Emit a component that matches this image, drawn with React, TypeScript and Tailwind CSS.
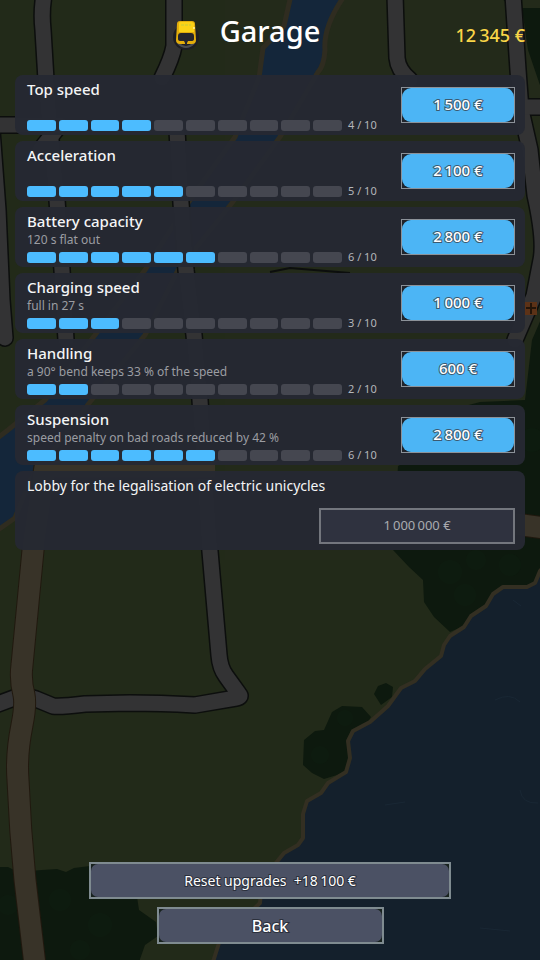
import clsx from 'clsx';

type Upgrade = {
  name: string;
  detail?: string;
  level: number;
  price: string;
};

const MAX_LEVEL = 10;

const upgrades: Upgrade[] = [
  { name: 'Top speed', level: 4, price: '1\u2009500 €' },
  { name: 'Acceleration', level: 5, price: '2\u2009100 €' },
  { name: 'Battery capacity', detail: '120 s flat out', level: 6, price: '2\u2009800 €' },
  { name: 'Charging speed', detail: 'full in 27 s', level: 3, price: '1\u2009000 €' },
  { name: 'Handling', detail: 'a 90° bend keeps 33 % of the speed', level: 2, price: '600 €' },
  { name: 'Suspension', detail: 'speed penalty on bad roads reduced by 42 %', level: 6, price: '2\u2009800 €' },
];

const streets = [
  'M44 -5 Q41 12 43 30 L46 80 L50 130 L57 200 L62 270 L66 340',
  'M174 -5 L174 46 Q172 58 162 78',
  'M177 130 L181 203 L186 270 L194 335 L200 400 L209 540 L219 655 Q220 668 226 676 L239 694 Q242 697 236 698 L195 705 Q160 703 130 703 L85 704 Q60 707 53 706 L36 699 L22 695 L-5 705',
  'M395 -5 L397 58 Q398 70 410 80',
  'M513 -5 L518 70 L521 110 L530 150 L535 195 Q545 240 541 260 L534 296 L515 340',
  'M518 107 L545 107',
  'M-5 125 L60 125 L40 150',
  'M-8 130 L-2 210 L2 300 L5 338',
];

const dirtRoad = 'M215 467 H45 L34 540 L22 665 Q20 680 24 695 Q26 705 22 725 Q16 755 18 780 Q20 830 25 880 L35 965 M515 524 L545 528';

function MapBackground() {
  return (
    <svg
      className="absolute inset-0 h-full w-full"
      viewBox="0 0 540 960"
      preserveAspectRatio="xMidYMid slice"
      aria-hidden="true"
    >
      <rect width="540" height="960" fill="#222a19" />
      <path d="M225 0 H540 V560 H225 Z" fill="#252c1b" opacity="0.6" />

      {/* River and lake */}
      <path
        d="M291 -5 L284 26 L263 48 L259 78 L235 137 L188 203 L145 270 L95 335 L45 400 L8 430 L-5 440 V532 L15 518 L30 480 L90 402 L145 335 L178 270 L232 203 L280 137 L318 72 Q324 66 325 50 Q323 26 345 -5 Z"
        fill="#14263a"
        stroke="#2f2c20"
        strokeWidth="5"
      />

      {/* Woods */}
      <g fill="#0d190e">
        <path d="M498 -5 L512 8 L545 8 V100 L528 50 L520 -5 Z" />
        <path d="M545 310 L532 340 L525 400 L480 402 L465 406 L450 440 L398 466 L393 550 L409 567 L423 580 L424 602 L434 617 L450 632 L545 590 Z" />
        <path d="M332 712 L342 706 L362 707 L371 717 L367 724 L350 732 L348 770 L337 775 L324 779 L312 773 L303 765 L304 740 L315 731 L324 730 Z" />
        <path d="M374 694 L378 686 L386 683 L393 687 L392 697 L381 705 Z" />
        <path d="M-5 867 L8 867 L18 872 L42 870 L57 869 L66 872 L74 868 L90 866 L136 890 L139 910 L156 922 L158 936 L145 945 L139 962 H-5 Z" />
      </g>
      <g fill="#123018" opacity="0.12">
        <circle cx="450" cy="572" r="12" />
        <circle cx="476" cy="560" r="10" />
        <circle cx="465" cy="595" r="11" />
        <circle cx="510" cy="565" r="11" />
        <circle cx="532" cy="440" r="12" />
        <circle cx="320" cy="755" r="9" />
        <circle cx="345" cy="718" r="8" />
        <circle cx="60" cy="900" r="11" />
        <circle cx="100" cy="925" r="12" />
        <circle cx="80" cy="950" r="10" />
        <circle cx="8" cy="905" r="10" />
      </g>

      {/* Sea */}
      <path
        d="M545 565 L540 571 L535 583 L527 587 L503 587 L493 594 L486 606 L471 616 L464 627 L450 636 L444 645 L441 656 L425 669 L415 681 L401 688 L388 706 L370 722 L353 731 L348 741 L350 758 L346 772 L328 783 L321 793 L307 801 L303 814 L303 838 L298 845 L284 853 L262 880 L260 903 L219 943 L212 965 H545 Z"
        fill="#14202c"
        stroke="#332f22"
        strokeWidth="4"
        strokeLinejoin="round"
      />
      <path d="M513 600 l8 6 M495 700 q15 -8 25 2 M385 805 l20 -3 M520 790 q2 14 18 13 M480 928 l30 3" fill="none" stroke="#192734" strokeWidth="1" />

      {/* Streets */}
      <g fill="none" strokeLinejoin="round" strokeLinecap="round">
        {streets.map((d) => (
          <path key={d} d={d} stroke="#0c0e0d" strokeWidth="18" />
        ))}
        {streets.map((d) => (
          <path key={d} d={d} stroke="#333334" strokeWidth="15" />
        ))}
      </g>
      <path d="M270 272 L290 268 L350 273" fill="none" stroke="#0c0e0d" strokeWidth="2" />

      {/* Dirt roads */}
      <g fill="none" strokeLinejoin="round">
        <path d={dirtRoad} stroke="#21190f" strokeWidth="23" />
        <path d={dirtRoad} stroke="#383328" strokeWidth="21" />
      </g>

      {/* Repair stop */}
      <rect x="525" y="302" width="12" height="13" fill="#5c3217" />
      <path d="M531 303 V314 M526 308 H536" stroke="#241509" strokeWidth="2" />
    </svg>
  );
}

function UnicycleIcon() {
  return (
    <svg className="mr-5 h-8 w-7 self-end justify-self-end" viewBox="0 0 28 32" aria-hidden="true">
      <circle cx="14" cy="18" r="13" fill="#1d1e23" />
      <path d="M6 24 Q14 32 22 24" fill="none" stroke="#4a4c50" strokeWidth="2" />
      <path d="M5 5 Q5 2 8 2 H20 Q23 2 23 5 L24 21 Q24 25 20 25 H8 Q4 25 4 21 Z" fill="#e3ad0c" />
      <path d="M7 4 Q7 3 9 3 H19 Q22 3 22 5 V13 H7 Z" fill="#fbd216" />
      <path d="M9 14 H19 Q22 14 22 17 V20 Q22 22 19 22 H16 L15 24 H13 L12 22 H9 Q6 22 6 20 V17 Q6 14 9 14 Z" fill="#25252c" />
      <path d="M13 22 H15 V26 H13 Z" fill="#25252c" />
      <path d="M9 6 H19" stroke="#c2cc3c" strokeWidth="1" strokeDasharray="3 1" />
      <circle cx="22" cy="9" r="1" fill="#fff2a0" />
    </svg>
  );
}

function LevelBar({ name, level }: { name: string; level: number }) {
  return (
    <div className="mt-1 flex h-[11px] items-center gap-[6px]">
      <div className="flex h-full flex-1 gap-[3px]" role="img" aria-label={`${name} level`}>
        {Array.from({ length: MAX_LEVEL }, (_, i) => (
          <span key={i} className={clsx('flex-1 rounded-[3px]', i < level ? 'bg-[#4cbcff]' : 'bg-[#454750]')} />
        ))}
      </div>
      <span className="w-[43px] text-[11px] text-[#b4b6ba]">
        {level} / {MAX_LEVEL}
      </span>
    </div>
  );
}

function UpgradeRow({ name, detail, level, price }: Upgrade) {
  return (
    <li className="flex items-center gap-[10px] rounded-lg bg-[#262932]/98 pt-[3px] pr-[10px] pb-1 pl-3">
      <div className="flex-1">
        <h2 className="text-[15px] leading-[22px] font-medium text-[#f4f5f6]">{name}</h2>
        <p className="h-4 text-[12px] leading-4 text-[#9b9da2]">{detail}</p>
        <LevelBar name={name} level={level} />
      </div>
      <button
        type="button"
        aria-label={`${name} ${price}`}
        className="h-9 w-[114px] border border-[#8c9299] bg-[#20242b]"
      >
        <span className="flex h-full items-center justify-center rounded-[9px] bg-[#4cb5f5] text-[15px] font-medium text-white [-webkit-text-stroke:2px_#3c5a70] [paint-order:stroke_fill]">
          {price}
        </span>
      </button>
    </li>
  );
}

export default function App() {
  return (
    <div className="relative flex min-h-screen flex-col overflow-hidden bg-[#222a19] font-['Noto_Sans',sans-serif]">
      <MapBackground />

      <header className="relative grid grid-cols-[1fr_auto_1fr] items-baseline px-[15px] pt-[11px] pb-6">
        <UnicycleIcon />
        <h1 className="text-[29px] leading-10 font-medium text-white">Garage</h1>
        <p className="text-right text-lg leading-6 font-medium text-[#f9d648]">12&#8201;345 €</p>
      </header>

      <main className="relative flex-1 px-[15px]">
        <ul className="flex flex-col gap-[6px]">
          {upgrades.map((upgrade) => (
            <UpgradeRow key={upgrade.name} {...upgrade} />
          ))}
        </ul>

        {/* Late game goal */}
        <section className="mt-[6px] flex flex-col rounded-lg bg-[#262932]/98 pt-[5px] pr-[10px] pb-[6px] pl-3">
          <h2 className="text-sm leading-5 font-[450] text-[#f4f5f6]">
            Lobby for the legalisation of electric unicycles
          </h2>
          <button
            type="button"
            disabled
            className="mt-3 h-9 w-[196px] self-end border-2 border-[#73767d] bg-[#2f323f] text-[13px] text-[#a9abb0]"
          >
            1&#8201;000&#8201;000 €
          </button>
        </section>
      </main>

      <footer className="relative flex flex-col items-center gap-2 pb-4">
        <button type="button" className="h-[37px] w-[362px] border-2 border-[#7f8b90] bg-[#18221e]">
          <span className="flex h-full items-center justify-center rounded-[7px] bg-[#4b5164] text-sm font-[450] whitespace-pre text-white [-webkit-text-stroke:2px_#2b303c] [paint-order:stroke_fill]">
            {'Reset upgrades  +18\u2009100 €'}
          </span>
        </button>
        <button type="button" className="h-[37px] w-[227px] border-2 border-[#7f8b90] bg-[#18221e]">
          <span className="flex h-full items-center justify-center rounded-[7px] bg-[#4b5164] text-base font-medium text-white [-webkit-text-stroke:2px_#2b303c] [paint-order:stroke_fill]">
            Back
          </span>
        </button>
      </footer>
    </div>
  );
}
